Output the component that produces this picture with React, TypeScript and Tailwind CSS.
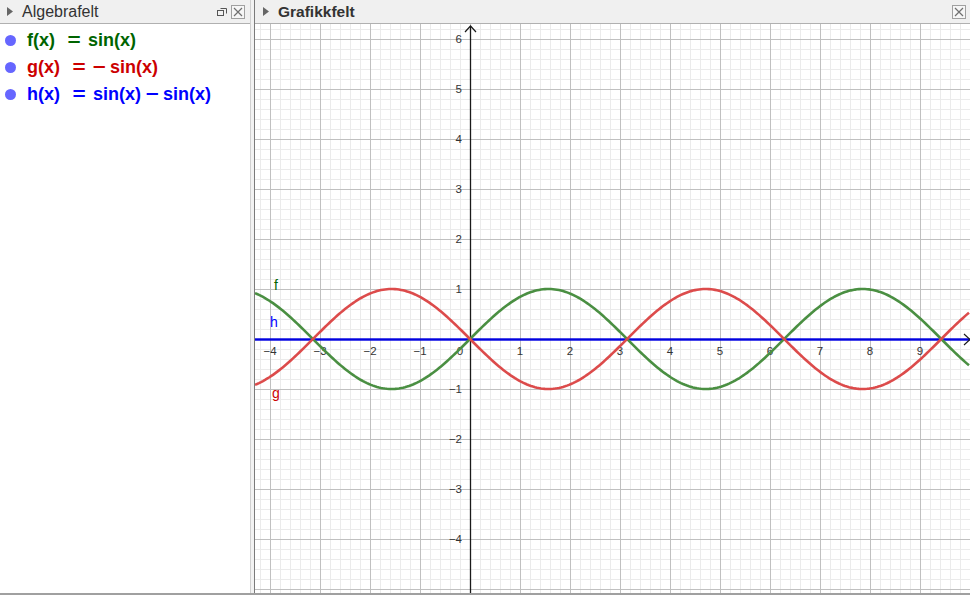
import React from "react";

const W = 715;
const H = 569;
const OX = 215;
const OY = 315;
const U = 50;

function curve(fn: (x: number) => number) {
  const pts: string[] = [];
  for (let px = 0; px <= W; px += 2) {
    const x = (px - OX) / U;
    const y = OY - U * fn(x);
    pts.push(`${px},${y.toFixed(2)}`);
  }
  return "M" + pts.join(" L");
}

function CloseBox() {
  return (
    <div className="w-[14px] h-[14px] border border-[#a0a0a0] bg-[#f6f6f6] flex items-center justify-center">
      <svg width="10" height="10" viewBox="0 0 10 10">
        <path d="M1 1 L9 9 M9 1 L1 9" stroke="#707070" strokeWidth="1.2" />
      </svg>
    </div>
  );
}

function Tri() {
  return (
    <svg width="6" height="9" viewBox="0 0 6 9">
      <path d="M0 0 L6 4.5 L0 9 Z" fill="#666" />
    </svg>
  );
}

function Graph() {
  const minorV: number[] = [];
  const majorV: number[] = [];
  for (let x = 5; x <= W; x += 10) {
    if ((x - OX) % 50 === 0) majorV.push(x);
    else minorV.push(x);
  }
  const minorH: number[] = [];
  const majorH: number[] = [];
  for (let y = 5; y <= H; y += 10) {
    if ((y - OY) % 50 === 0) majorH.push(y);
    else minorH.push(y);
  }
  const xLabels = [-4, -3, -2, -1, 1, 2, 3, 4, 5, 6, 7, 8, 9];
  const yLabels = [6, 5, 4, 3, 2, 1, -1, -2, -3, -4];
  const lbl = (n: number) => (n < 0 ? "\u2212" + Math.abs(n) : String(n));

  return (
    <svg width={W} height={H} className="block" style={{ fontFamily: "'Liberation Sans', Arial, sans-serif" }}>
      <rect width={W} height={H} fill="#fff" />
      {minorV.map((x) => (
        <line key={"mv" + x} x1={x + 0.5} y1={0} x2={x + 0.5} y2={H} stroke="#ebebeb" />
      ))}
      {minorH.map((y) => (
        <line key={"mh" + y} x1={0} y1={y + 0.5} x2={W} y2={y + 0.5} stroke="#ebebeb" />
      ))}
      {majorV.map((x) => (
        <line key={"Mv" + x} x1={x + 0.5} y1={0} x2={x + 0.5} y2={H} stroke="#c0c0c0" />
      ))}
      {majorH.map((y) => (
        <line key={"Mh" + y} x1={0} y1={y + 0.5} x2={W} y2={y + 0.5} stroke="#c0c0c0" />
      ))}

      <line x1={OX + 0.5} y1={2} x2={OX + 0.5} y2={H} stroke="#1a1a1a" strokeWidth="1.3" />
      <path d={`M${OX - 5} 8 L${OX + 0.5} 2 L${OX + 6} 8`} fill="none" stroke="#1a1a1a" strokeWidth="1.2" />
      <line x1={0} y1={OY + 0.5} x2={W - 1} y2={OY + 0.5} stroke="#1a1a1a" strokeWidth="1.3" />

      {xLabels.map((n) => (
        <text key={"xl" + n} x={OX + n * U} y={OY + 16} fontSize="11.5" fill="#333" textAnchor="middle">
          {lbl(n)}
        </text>
      ))}
      <text x={OX - 10} y={OY + 16} fontSize="11.5" fill="#333" textAnchor="middle">
        0
      </text>
      {yLabels.map((n) => (
        <text key={"yl" + n} x={OX - 8} y={OY - n * U + 4} fontSize="11.5" fill="#333" textAnchor="end">
          {lbl(n)}
        </text>
      ))}

      <line x1={0} y1={OY + 0.5} x2={W} y2={OY + 0.5} stroke="#0000ff" strokeWidth="2.6" strokeOpacity="0.85" />
      <path d={`M${W - 6} ${OY - 5} L${W} ${OY + 0.5} L${W - 6} ${OY + 6}`} fill="none" stroke="#1a1a1a" strokeWidth="1.2" />
      <path d={curve((x) => Math.sin(x))} fill="none" stroke="#4a8f42" strokeWidth="2.6" />
      <path d={curve((x) => -Math.sin(x))} fill="none" stroke="#dc4b4b" strokeWidth="2.6" />

      <text x={19} y={266} fontSize="14" fill="#006400">f</text>
      <text x={15} y={303} fontSize="14" fill="#0000ff">h</text>
      <text x={17} y={374} fontSize="14" fill="#cc0000">g</text>
    </svg>
  );
}

const rows = [
  { color: "text-[#006400]", left: "f(x)", right: ["sin(x)"] },
  { color: "text-[#cc0000]", left: "g(x)", right: ["\u2212", "sin(x)"] },
  { color: "text-[#0000ff]", left: "h(x)", right: ["sin(x)", "\u2212", "sin(x)"] },
];

export default function App() {
  return (
    <div className="w-[970px] h-[595px] flex bg-white border-b-2 border-[#a0a0a0] overflow-hidden font-['Liberation_Sans',Arial,sans-serif]">
      <div className="w-[251px] flex flex-col border-r border-[#d0d0d0]">
        <div className="h-[24px] bg-[#f0f0f0] border-b border-[#b0b0b0] flex items-center pl-[7px] pr-[5px]">
          <Tri />
          <span className="ml-[9px] text-[16px] text-[#333] leading-none">Algebrafelt</span>
          <div className="ml-auto flex items-center gap-[3px]">
            <svg width="12" height="10" viewBox="0 0 12 10">
              <rect x="1.5" y="3.5" width="6" height="5" fill="none" stroke="#555" />
              <path d="M4.5 1.5 H10.5 V6.5" fill="none" stroke="#555" />
            </svg>
            <CloseBox />
          </div>
        </div>
        <div className="flex flex-col pt-[3px]">
          {rows.map((r, i) => (
            <div key={i} className="h-[27px] flex items-center pl-[5px]">
              <span className="w-[11px] h-[11px] rounded-full bg-[#6666ff]" />
              <span className={`ml-[11px] text-[18px] font-bold flex items-center gap-[5px] ${r.color}`}>
                <span>{r.left}</span>
                <span className="inline-block w-[14px] text-center ml-[7px] mr-[2px] scale-x-125">=</span>
                {r.right.map((p, j) => (
                  <span key={j} className={p === "\u2212" ? "inline-block w-[12px] text-center scale-x-125" : ""}>
                    {p}
                  </span>
                ))}
              </span>
            </div>
          ))}
        </div>
      </div>
      <div className="w-[3px] bg-[#f2f2f2]" />
      <div className="flex-1 flex flex-col border-l border-[#7a7a7a]">
        <div className="h-[24px] bg-[#f0f0f0] border-b border-[#b0b0b0] flex items-center pl-[8px] pr-[4px]">
          <Tri />
          <span className="ml-[9px] text-[15.5px] font-bold text-[#333] leading-none">Grafikkfelt</span>
          <div className="ml-auto">
            <CloseBox />
          </div>
        </div>
        <Graph />
      </div>
    </div>
  );
}
